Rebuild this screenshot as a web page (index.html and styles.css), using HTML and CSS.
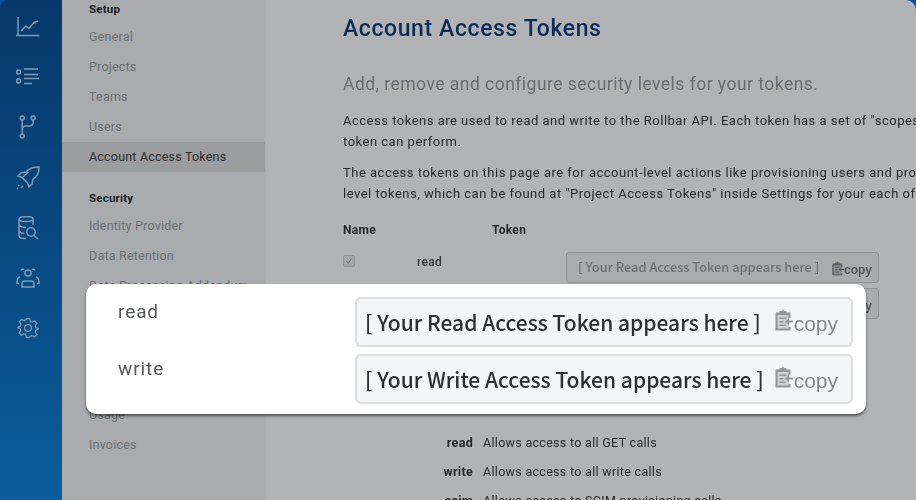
FILE: index.html
```html
<!DOCTYPE html>
<html lang="en">
<head>
  <meta charset="UTF-8">
  <title>Account Access Tokens</title>
  <link rel="stylesheet" href="styles.css">
</head>
<body>

<div class="page">
  <div class="rail">
    <svg class="rail-icon" viewBox="0 0 24 24"><path d="M2 2v18M0 20.500h23.500"/><path d="M5 16l5-5 3 2.500 5-6 1.500 1M18 7.500l4-1.500"/></svg>
    <svg class="rail-icon" viewBox="0 0 24 24"><circle cx="2.500" cy="7" r="2"/><circle cx="2.500" cy="16" r="2"/><path d="M8 4h14M8 9.500h14M8 13.500h15M8 18.500h8"/></svg>
    <svg class="rail-icon" viewBox="0 0 24 24"><circle cx="6.200" cy="3" r="2"/><circle cx="17.200" cy="3" r="2"/><circle cx="6.200" cy="21" r="2"/><path d="M6.200 5v14M17.200 5v2q0 4-4 4h-3q-4 0-4 4"/></svg>
    <svg class="rail-icon" viewBox="0 0 24 24"><path d="M23 1q-9 0-13 5l-5 1-3 3 4 1.500 5.500 5.500 1.500 4 3-3 1-5q6-3 6-12zM7 11l5.500-5"/><path d="M2 20l1-1M5 22l2-2M1 23l1-1"/></svg>
    <svg class="rail-icon" viewBox="0 0 24 24"><ellipse cx="10" cy="3" rx="7" ry="2.500"/><path d="M3 3v17q0 2.500 7 2.500M17 3v6M3 9q2 2.500 7 2.500M3 15q2 2.500 5.500 2.500"/><circle cx="15" cy="16" r="4.200"/><path d="M18 19.500l4 3.500"/></svg>
    <svg class="rail-icon" viewBox="0 0 24 24"><circle cx="12" cy="7" r="3"/><path d="M6 21v-3q0-3 3-3h6q3 0 3 3v3zM5 4.500a2 2 0 0 1 3-1M19 4.500a2 2 0 0 0-3-1M1 16q0-4 3-5M23 16q0-4-3-5M1 16v1.500h2M23 16v1.500h-2"/></svg>
    <svg class="rail-icon" viewBox="0 0 24 24"><g transform="translate(1.800 1.800) scale(.85)"><circle cx="12" cy="12" r="4"/><path d="M10 1h4l.7 3.200 2.200 1 2.900-1.700 2.700 3-1.900 2.600.6 2.400 3 1.200-.1.600-3 1.500-.6 2.200 1.800 2.800-2.800 2.800-2.800-1.800-2.200.8L14 23h-4l-.7-3.300-2.200-.9-2.900 1.800-2.700-2.900 1.900-2.700-.7-2.200L0 11.600l.1-.6 3-1.200.7-2.400L1.900 4.800l2.700-3 2.900 1.700 2-1z"/></g></svg>
  </div>

  <div class="side">
    <h4>Setup</h4>
    <a>General</a>
    <a>Projects</a>
    <a>Teams</a>
    <a>Users</a>
    <a class="active">Account Access Tokens</a>
    <h4 class="gap">Security</h4>
    <a>Identity Provider</a>
    <a>Data Retention</a>
    <a>Data Processing Addendum</a>
    <a class="billing">Usage</a>
    <a>Invoices</a>
  </div>

  <div class="main">
    <h1>Account Access Tokens</h1>
    <h2>Add, remove and configure security levels for your tokens.</h2>
    <p>Access tokens are used to read and write to the Rollbar API. Each token has a set of "scopes"<br>token can perform.</p>
    <p>The access tokens on this page are for account-level actions like provisioning users and projects<br>level tokens, which can be found at "Project Access Tokens" inside Settings for your each of</p>

    <div class="head-row">
      <b>Name</b>
      <b>Token</b>
    </div>
    <div class="token-row">
      <span class="check">
        <svg viewBox="0 0 12 12"><path d="M3 6.500l2 2.500 4-6"/></svg>
      </span>
      <span class="token-name">read</span>
      <div class="small-box">
        <span class="small-text">[ Your Read Access Token appears here ]</span>
        <span class="small-copy">
          <svg class="clip" viewBox="0 0 18 22"><use href="#clip"/></svg>copy
        </span>
      </div>
    </div>
    <div class="token-row">
      <span class="check"></span>
      <span class="token-name">write</span>
      <div class="small-box">
        <span class="small-text">[ Your Write Access Token appears here ]</span>
        <span class="small-copy">
          <svg class="clip" viewBox="0 0 18 22"><use href="#clip"/></svg>copy
        </span>
      </div>
    </div>

    <dl class="scopes">
      <div><dt>read</dt><dd>Allows access to all GET calls</dd></div>
      <div><dt>write</dt><dd>Allows access to all write calls</dd></div>
      <div><dt>scim</dt><dd>Allows access to SCIM provisioning calls</dd></div>
    </dl>
  </div>
</div>

<div class="callout">
  <div class="callout-row">
    <span class="callout-name">read</span>
    <div class="big-box">
      <span>[ Your Read Access Token appears here ]</span>
      <span class="big-copy">
        <svg class="big-clip" viewBox="0 0 18 22"><use href="#clip"/></svg>copy
      </span>
    </div>
  </div>
  <div class="callout-row">
    <span class="callout-name">write</span>
    <div class="big-box">
      <span>[ Your Write Access Token appears here ]</span>
      <span class="big-copy">
        <svg class="big-clip" viewBox="0 0 18 22"><use href="#clip"/></svg>copy
      </span>
    </div>
  </div>
</div>

<svg class="defs" width="0" height="0">
  <symbol id="clip" viewBox="0 0 18 22">
    <path d="M2 5h12v16H2z" fill="currentColor" opacity="0.4"/>
    <path d="M0.500 3.500h4V2h2.500L8 0 9 2h2.500v1.500h4V9h-2V6h-11v13.500h11V18h2v3.500H0.500z" fill="currentColor"/>
    <path d="M4.500 8.500h7V10h-7zM4.500 12h4v1.500h-4zM4.500 15.500h6V17h-6z" fill="currentColor"/>
    <path d="M18 11.500v2h-4v2.500l-4-3.500 4-3.500v2.500z" fill="currentColor"/>
  </symbol>
</svg>

</body>
</html>
```

FILE: styles.css
```css
* {
  box-sizing: border-box;
}
body {
  margin: 0;
  height: 500px;
  overflow: hidden;
  background: #0b4f9c;
  font-family: Roboto, Arial, sans-serif;
  position: relative;
}
.page {
  display: flex;
  height: 500px;
  filter: blur(0.4px);
}
.rail {
  width: 62px;
  flex: none;
  border-top-left-radius: 8px;
  background: linear-gradient(#07386a, #0a5c9a);
  display: flex;
  flex-direction: column;
  align-items: center;
  gap: 26.200px;
  padding: 15px 7px 0 0;
}
.rail-icon {
  width: 24px;
  height: 24px;
  fill: none;
  stroke: #8199b3;
  stroke-width: 1.500;
  flex: none;
}
.side {
  width: 204px;
  flex: none;
  background: #a9abaf;
  font-size: 12.500px;
  letter-spacing: 0.2px;
}
.side h4 {
  margin: 0;
  padding-left: 27px;
  height: 18px;
  line-height: 18px;
  font-size: 11.500px;
  font-weight: 700;
  color: #17191c;
}
.side h4:first-child {
  margin-bottom: 4px;
}
.side h4.gap {
  margin-top: 17px;
  margin-bottom: 4px;
}
.side a {
  display: block;
  height: 30px;
  line-height: 30px;
  padding-left: 27px;
  color: #6b6e72;
}
.side a.active {
  background: #9c9d9f;
  color: #2b2c2e;
  margin-right: 1px;
}
.side a.billing {
  margin-top: 99px;
}
.main {
  flex: 1;
  min-width: 0;
  overflow: hidden;
  background: #b2b3b5;
  border-top-right-radius: 10px;
  padding: 15px 0 0 77px;
  white-space: nowrap;
}
h1 {
  margin: 0;
  font-size: 23px;
  line-height: 28px;
  font-weight: 500;
  color: #0b2c5a;
  letter-spacing: 0.6px;
}
h2 {
  margin: 27px 0 0 0;
  font-size: 17.500px;
  line-height: 28px;
  font-weight: 400;
  color: #696c70;
  letter-spacing: 0.47px;
}
p {
  margin: 13px 0 0 0;
  font-size: 13px;
  line-height: 20.500px;
  color: #26282a;
  letter-spacing: 0.5px;
}
p + p {
  margin-top: 11px;
}
.head-row {
  display: flex;
  gap: 116px;
  margin-top: 16px;
  font-size: 12px;
  line-height: 20px;
  color: #26282a;
  letter-spacing: 0.3px;
}
.head-row + .token-row {
  margin-top: 12px;
}
.token-row {
  display: flex;
  align-items: flex-start;
  margin-top: 3px;
  height: 33px;
}
.check {
  width: 12px;
  height: 12px;
  margin-top: 3px;
  border: 1px solid #8f9195;
  border-radius: 2px;
  background: #a6a7a9;
  flex: none;
}
.check svg {
  display: block;
  fill: none;
  stroke: #6e7073;
  stroke-width: 1.200;
}
.token-name {
  width: 149px;
  margin-left: 62px;
  font-size: 12px;
  line-height: 20px;
  letter-spacing: 0.3px;
  font-weight: 500;
  color: #35373a;
  flex: none;
}
.small-box {
  width: 313px;
  height: 31px;
  flex: none;
  border: 1px solid #8e9094;
  border-radius: 3px;
  background: #aaabad;
  padding: 0 6px 0 11px;
  display: flex;
  align-items: center;
  justify-content: space-between;
  font-family: "Noto Sans CJK KR", "Noto Sans", sans-serif;
  font-size: 12.800px;
  font-weight: 500;
  color: #6f7073;
}
.small-text {
  padding-bottom: 2px;
}
.small-copy {
  display: flex;
  align-items: center;
  font-family: "Liberation Sans", Arial, sans-serif;
  font-size: 12px;
  font-weight: 700;
  color: #55575a;
  padding-top: 4px;
}
.clip {
  width: 12px;
  height: 15px;
  margin-top: -3px;
  color: #5e6063;
}
.scopes {
  margin: 107px 0 0 0;
  font-size: 12.500px;
  letter-spacing: 0.3px;
  color: #26282a;
}
.scopes div {
  display: flex;
  height: 29px;
  line-height: 29px;
}
.scopes dt {
  width: 130px;
  text-align: right;
  font-weight: 700;
}
.scopes dd {
  margin: 0 0 0 10px;
}
.callout {
  position: absolute;
  left: 86px;
  top: 284px;
  width: 780px;
  height: 130px;
  background: #fff;
  border-radius: 10px;
  box-shadow: 0 2px 3px rgba(0, 0, 0, 0.55);
  padding: 12.500px 13px 0 32px;
  display: flex;
  flex-direction: column;
  gap: 7px;
}
.callout-row {
  display: flex;
  height: 50px;
}
.callout-name {
  width: 237px;
  flex: none;
  font-size: 19px;
  line-height: 30px;
  color: #555658;
  letter-spacing: 0.9px;
}
.big-box {
  flex: 1;
  border: 2px solid #dcddde;
  border-radius: 6px;
  background: #f4f5f7;
  padding: 0 13px 0 8px;
  display: flex;
  align-items: center;
  justify-content: space-between;
  font-family: "Noto Sans CJK KR", "Noto Sans", sans-serif;
  font-size: 21px;
  font-weight: 500;
  color: #2d2e31;
  white-space: nowrap;
}
.big-copy {
  display: flex;
  align-items: center;
  font-family: "Liberation Sans", Arial, sans-serif;
  font-size: 21px;
  font-weight: 400;
  color: #87888a;
  padding-top: 4px;
}
.big-clip {
  width: 18px;
  height: 22px;
  margin-right: 1px;
  margin-top: -7px;
  color: #949597;
}
.defs {
  position: absolute;
}
```
